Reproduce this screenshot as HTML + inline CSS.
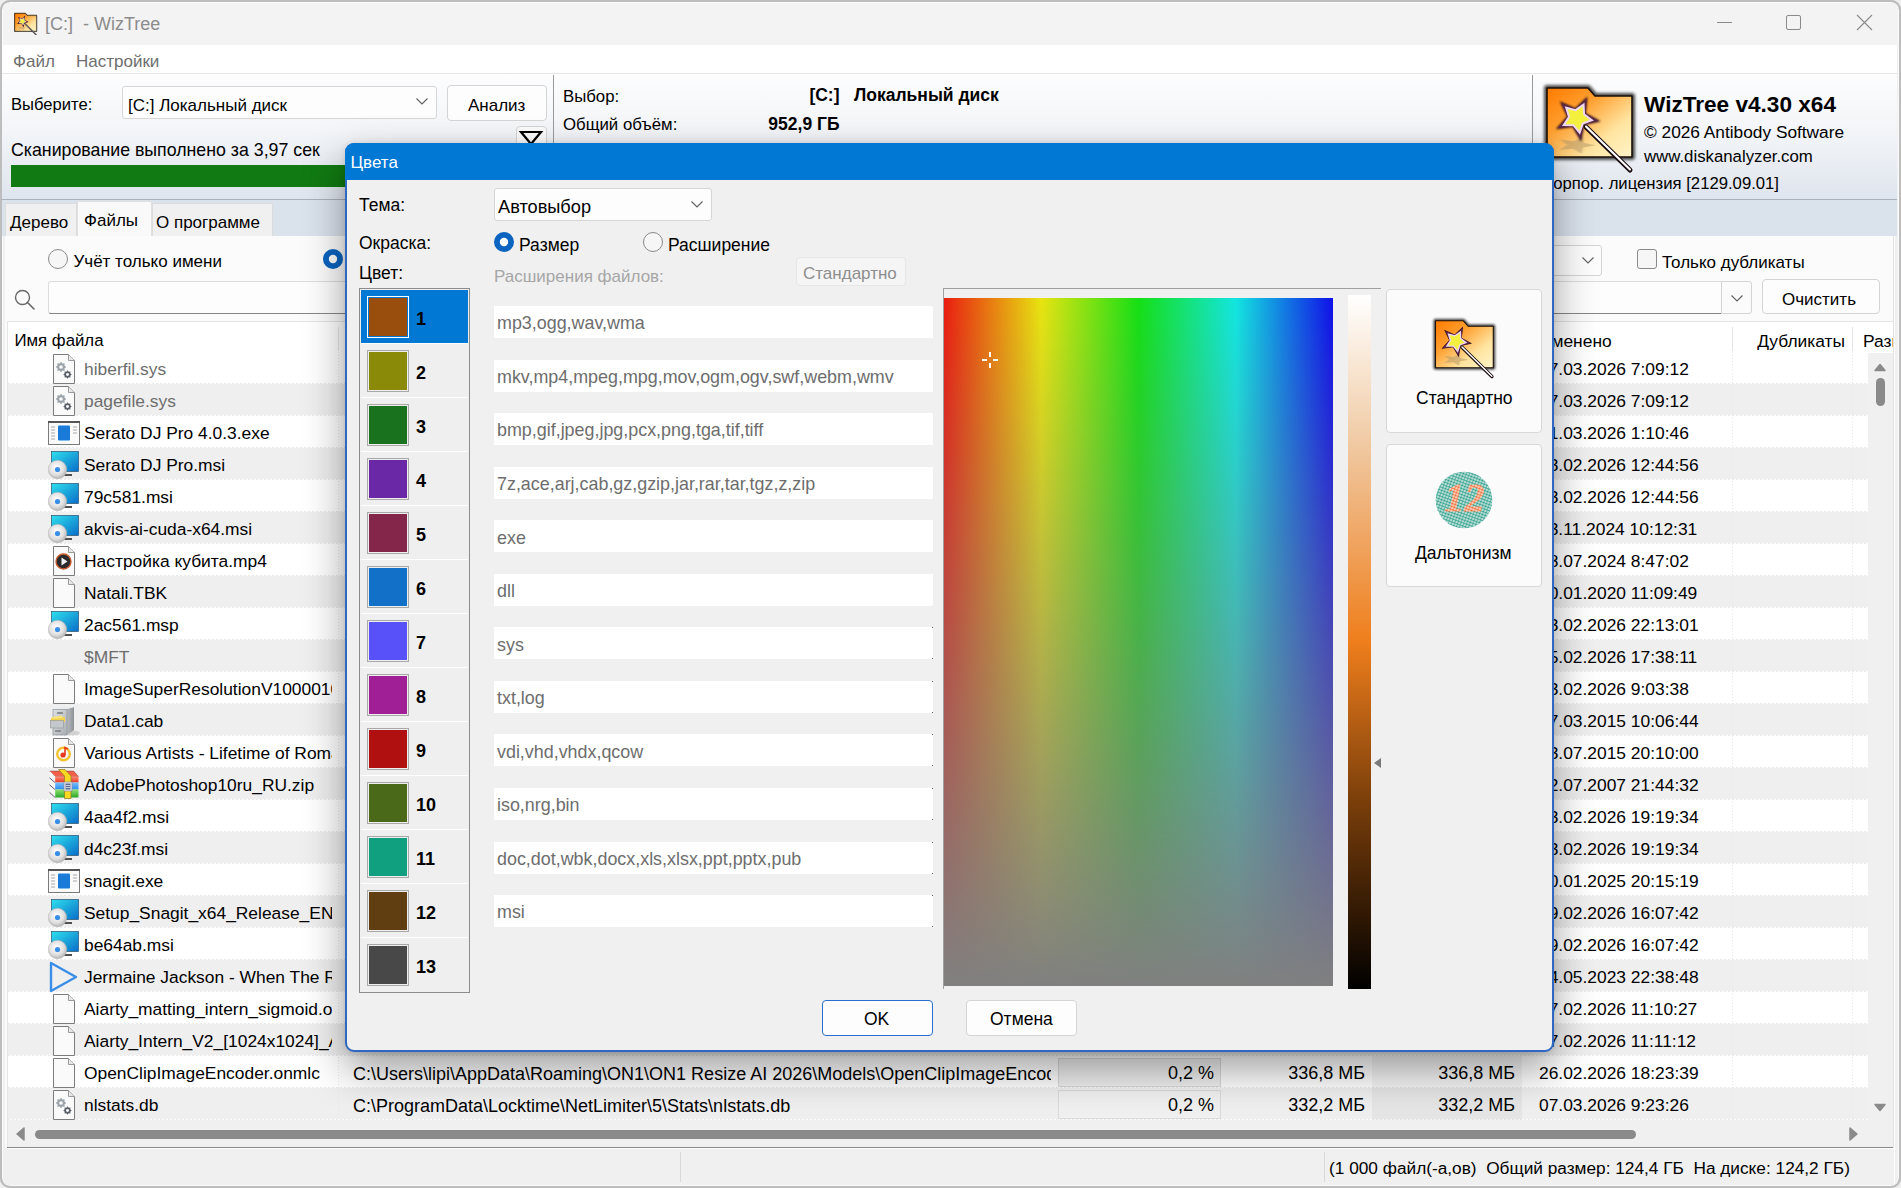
<!DOCTYPE html>
<html><head><meta charset="utf-8"><style>
html,body{margin:0;padding:0;}
body{width:1901px;height:1188px;position:relative;overflow:hidden;background:#eeeeee;font-family:"Liberation Sans", sans-serif;}
.t{position:absolute;white-space:pre;line-height:1;font-family:"Liberation Sans", sans-serif;}
</style></head><body>

<div style="position:absolute;left:0px;top:0px;width:1901px;height:1188px;background:#f0f0f0;border:2px solid #bdbdbd;border-radius:10px;box-sizing:border-box;box-shadow:inset 0 0 0 1px #fbfbfb;"></div>
<div style="position:absolute;left:3px;top:3px;width:1895px;height:42px;background:#f3f3f3;border-radius:8px 8px 0 0;"></div>
<div style="position:absolute;left:2px;top:45px;width:1895px;height:28px;background:#ffffff;"></div>
<div style="position:absolute;left:2px;top:73px;width:1895px;height:1px;background:#e6e6e6;"></div>
<svg style="position:absolute;left:11.5px;top:10.5px;" width="27.5" height="25.5" viewBox="0 0 108 100">
<defs>
<linearGradient id="clg" x1="0" y1="0" x2="1" y2="1"><stop offset="0" stop-color="#ff7a00"/><stop offset="0.35" stop-color="#ffa030"/><stop offset="0.7" stop-color="#ffe4a0"/><stop offset="1" stop-color="#fff4c8"/></linearGradient>
<filter id="cbl" x="-20%" y="-20%" width="140%" height="140%"><feGaussianBlur stdDeviation="1.6"/></filter>
<filter id="cbl2" x="-30%" y="-30%" width="160%" height="160%"><feGaussianBlur stdDeviation="1.0"/></filter>
</defs>
<path d="M11 10 h41 l7 8 h37 v61 h-85 z" fill="none" stroke="#3a3a3a" stroke-width="6" stroke-linejoin="round" filter="url(#cbl)" opacity="0.9"/>
<path d="M11 10 h41 l7 8 h37 v61 h-85 z" fill="url(#clg)" stroke="#1a0e08" stroke-width="1.6" stroke-linejoin="round"/>
<polygon points="46.84,48.21 47.46,61.97 59.99,67.70 47.09,72.54 45.51,86.23 36.92,75.46 23.42,78.18 31.01,66.69 24.24,54.69 37.52,58.35" transform="scale(1,0.45) translate(0,82)" fill="#a89068" opacity="0.45" filter="url(#cbl2)"/>
<polygon points="51.52,18.43 49.83,35.31 64.77,43.34 48.19,46.95 45.17,63.64 36.62,48.99 19.81,51.27 31.10,38.61 23.74,23.33 39.26,30.15" fill="#2a0a1a" filter="url(#cbl2)"/>
<polygon points="50.64,20.23 49.39,35.54 62.79,43.06 47.83,46.60 44.82,61.67 36.84,48.54 21.58,50.33 31.59,38.68 25.17,24.72 39.35,30.64" fill="#5a2848"/>
<polygon points="47.58,26.52 48.06,36.24 55.85,42.09 46.75,45.56 43.60,54.77 37.49,47.19 27.76,47.04 33.08,38.89 30.21,29.58 39.61,32.12" fill="#f4f040" stroke="#f0d8f0" stroke-width="2"/>
<path d="M50 49 L94 92" stroke="#1a0a10" stroke-width="5" stroke-linecap="round"/>
<path d="M50 48.5 L94 91.5" stroke="#ffffff" stroke-width="2.2" stroke-linecap="round"/>
</svg>
<div class="t" style="left:45px;top:14.8px;font-size:18px;color:#8c8c8c;font-weight:normal;">[C:]&nbsp;&nbsp;- WizTree</div>
<div style="position:absolute;left:1717px;top:22px;width:15px;height:1px;background:#8a8a8a;"></div>
<div style="position:absolute;left:1786px;top:15px;width:13px;height:13px;border:1px solid #8a8a8a;border-radius:2px;"></div>
<svg style="position:absolute;left:1856px;top:14px;" width="17" height="17" viewBox="0 0 17 17"><path d="M1 1 L16 16 M16 1 L1 16" stroke="#8a8a8a" stroke-width="1.1"/></svg>
<div class="t" style="left:13px;top:52.6px;font-size:17px;color:#6e6e6e;font-weight:normal;">Файл</div>
<div class="t" style="left:76px;top:52.6px;font-size:17px;color:#6e6e6e;font-weight:normal;">Настройки</div>
<div style="position:absolute;left:2px;top:74px;width:1895px;height:125px;background:linear-gradient(#fdfdfe 0%,#f3f5f8 45%,#dfe5ee 100%);"></div>
<div style="position:absolute;left:2px;top:199px;width:1895px;height:1px;background:#a9b1bb;"></div>
<div class="t" style="left:11px;top:96.9px;font-size:16.6px;color:#000;font-weight:normal;">Выберите:</div>
<div style="position:absolute;left:122px;top:86px;width:314px;height:32px;background:#fdfdfd;border:1px solid #d6d6d6;border-radius:3px;box-sizing:border-box;width:315px;height:33px;"></div>
<div class="t" style="left:128px;top:96.6px;font-size:17px;color:#000;font-weight:normal;">[C:] Локальный диск</div>
<svg style="position:absolute;left:415px;top:96px;" width="14" height="10" viewBox="0 0 14 10"><path d="M1.5 2.5 L7 8 L12.5 2.5" fill="none" stroke="#606060" stroke-width="1.1"/></svg>
<div style="position:absolute;left:447px;top:85px;width:100px;height:36px;background:#fdfdfd;border:1px solid #d4d4d4;border-radius:4px;box-sizing:border-box;"></div>
<div class="t" style="left:468px;top:96.6px;font-size:17px;color:#000;font-weight:normal;">Анализ</div>
<div style="position:absolute;left:516px;top:126px;width:31px;height:30px;background:#fbfbfb;border:1px solid #d4d4d4;border-radius:4px;box-sizing:border-box;"></div>
<svg style="position:absolute;left:518px;top:130px;" width="26" height="16" viewBox="0 0 26 16"><path d="M3 2 L23 2 L13 14 Z" fill="none" stroke="#000" stroke-width="2.2" stroke-linejoin="miter"/></svg>
<div class="t" style="left:11px;top:141.5px;font-size:17.76px;color:#000;font-weight:normal;">Сканирование выполнено за 3,97 сек</div>
<div style="position:absolute;left:11px;top:165px;width:535px;height:22px;background:#117a12;"></div>
<div style="position:absolute;left:553px;top:75px;width:1px;height:124px;background:#9a9a9a;"></div>
<div class="t" style="left:563px;top:88.8px;font-size:16.8px;color:#000;font-weight:normal;">Выбор:</div>
<div class="t" style="left:563px;top:116.8px;font-size:16.8px;color:#000;font-weight:normal;">Общий объём:</div>
<div class="t" style="left:700px;top:87.2px;width:139.5px;text-align:right;font-size:17.5px;font-weight:bold;">[C:]</div>
<div class="t" style="left:854px;top:87.2px;font-size:17.5px;color:#000;font-weight:bold;">Локальный диск</div>
<div class="t" style="left:700px;top:116.2px;width:139.5px;text-align:right;font-size:17.5px;font-weight:bold;">952,9 ГБ</div>
<div style="position:absolute;left:1532px;top:75px;width:1px;height:124px;background:#9a9a9a;"></div>
<svg style="position:absolute;left:1536px;top:78px;" width="108" height="100" viewBox="0 0 108 100">
<defs>
<linearGradient id="alg" x1="0" y1="0" x2="1" y2="1"><stop offset="0" stop-color="#ff7a00"/><stop offset="0.35" stop-color="#ffa030"/><stop offset="0.7" stop-color="#ffe4a0"/><stop offset="1" stop-color="#fff4c8"/></linearGradient>
<filter id="abl" x="-20%" y="-20%" width="140%" height="140%"><feGaussianBlur stdDeviation="1.6"/></filter>
<filter id="abl2" x="-30%" y="-30%" width="160%" height="160%"><feGaussianBlur stdDeviation="1.0"/></filter>
</defs>
<path d="M11 10 h41 l7 8 h37 v61 h-85 z" fill="none" stroke="#3a3a3a" stroke-width="6" stroke-linejoin="round" filter="url(#abl)" opacity="0.9"/>
<path d="M11 10 h41 l7 8 h37 v61 h-85 z" fill="url(#alg)" stroke="#1a0e08" stroke-width="1.6" stroke-linejoin="round"/>
<polygon points="46.84,48.21 47.46,61.97 59.99,67.70 47.09,72.54 45.51,86.23 36.92,75.46 23.42,78.18 31.01,66.69 24.24,54.69 37.52,58.35" transform="scale(1,0.45) translate(0,82)" fill="#a89068" opacity="0.45" filter="url(#abl2)"/>
<polygon points="51.52,18.43 49.83,35.31 64.77,43.34 48.19,46.95 45.17,63.64 36.62,48.99 19.81,51.27 31.10,38.61 23.74,23.33 39.26,30.15" fill="#2a0a1a" filter="url(#abl2)"/>
<polygon points="50.64,20.23 49.39,35.54 62.79,43.06 47.83,46.60 44.82,61.67 36.84,48.54 21.58,50.33 31.59,38.68 25.17,24.72 39.35,30.64" fill="#5a2848"/>
<polygon points="47.58,26.52 48.06,36.24 55.85,42.09 46.75,45.56 43.60,54.77 37.49,47.19 27.76,47.04 33.08,38.89 30.21,29.58 39.61,32.12" fill="#f4f040" stroke="#f0d8f0" stroke-width="2"/>
<path d="M50 49 L94 92" stroke="#1a0a10" stroke-width="5" stroke-linecap="round"/>
<path d="M50 48.5 L94 91.5" stroke="#ffffff" stroke-width="2.2" stroke-linecap="round"/>
</svg>
<div class="t" style="left:1644px;top:93.9px;font-size:22.6px;color:#000;font-weight:bold;">WizTree v4.30 x64</div>
<div class="t" style="left:1644px;top:124.4px;font-size:17.3px;color:#000;font-weight:normal;">© 2026 Antibody Software</div>
<div class="t" style="left:1644px;top:148.8px;font-size:16.8px;color:#000;font-weight:normal;">www.diskanalyzer.com</div>
<div class="t" style="left:1380px;top:175.6px;width:399px;text-align:right;font-size:16.7px;">Корпор. лицензия [2129.09.01]</div>
<div style="position:absolute;left:2px;top:200px;width:1895px;height:36px;background:#dae2ec;"></div>
<div style="position:absolute;left:5px;top:203px;width:72px;height:33px;background:#f0f0f0;border:1px solid #dcdcdc;border-bottom:none;box-sizing:border-box;"></div>
<div style="position:absolute;left:152px;top:203px;width:121px;height:33px;background:#f0f0f0;border:1px solid #dcdcdc;border-bottom:none;box-sizing:border-box;"></div>
<div style="position:absolute;left:77px;top:201px;width:75px;height:37px;background:#f9f9f9;border:1px solid #e0e0e0;border-bottom:none;box-sizing:border-box;"></div>
<div class="t" style="left:10px;top:213.6px;font-size:17px;color:#000;font-weight:normal;">Дерево</div>
<div class="t" style="left:84px;top:211.6px;font-size:17px;color:#000;font-weight:normal;">Файлы</div>
<div class="t" style="left:156px;top:213.6px;font-size:17px;color:#000;font-weight:normal;">О программе</div>
<div style="position:absolute;left:5px;top:236px;width:1892px;height:912px;background:#fbfbfb;"></div>
<svg style="position:absolute;left:47px;top:248px;" width="22" height="22" viewBox="0 0 22 22"><circle cx="11" cy="11" r="9.5" fill="#f6f6f6" stroke="#8a8a8a" stroke-width="1"/></svg>
<div class="t" style="left:73.5px;top:253.1px;font-size:17px;color:#000;font-weight:normal;">Учёт только имени</div>
<svg style="position:absolute;left:322px;top:248px;" width="22" height="22" viewBox="0 0 22 22"><circle cx="11" cy="11" r="10" fill="#0a64c0"/><circle cx="11" cy="11" r="4.2" fill="#fff"/></svg>
<div style="position:absolute;left:1400px;top:245px;width:202px;height:31px;background:#fdfdfd;border:1px solid #d4d4d4;border-radius:3px;box-sizing:border-box;"></div>
<svg style="position:absolute;left:1581px;top:255px;" width="14" height="10" viewBox="0 0 14 10"><path d="M1.5 2.5 L7 8 L12.5 2.5" fill="none" stroke="#606060" stroke-width="1.1"/></svg>
<div style="position:absolute;left:1637px;top:249px;width:20px;height:20px;background:#f6f6f6;border:1px solid #8a8a8a;border-radius:3px;box-sizing:border-box;"></div>
<div class="t" style="left:1662px;top:253.6px;font-size:17px;color:#000;font-weight:normal;">Только дубликаты</div>
<svg style="position:absolute;left:13px;top:288px;" width="24" height="24" viewBox="0 0 24 24"><circle cx="9.5" cy="9.5" r="7" fill="none" stroke="#666" stroke-width="1.4"/><path d="M14.5 14.5 L21 21" stroke="#666" stroke-width="1.6" stroke-linecap="round"/></svg>
<div style="position:absolute;left:48px;top:281px;width:1674px;height:33px;background:#fdfdfd;border:1px solid #dcdcdc;border-bottom:1px solid #868686;border-radius:3px 0 0 3px;box-sizing:border-box;"></div>
<div style="position:absolute;left:1721px;top:281px;width:31px;height:33px;background:#fbfbfb;border:1px solid #d4d4d4;border-radius:0 3px 3px 0;box-sizing:border-box;"></div>
<svg style="position:absolute;left:1730px;top:293px;" width="14" height="10" viewBox="0 0 14 10"><path d="M1.5 2.5 L7 8 L12.5 2.5" fill="none" stroke="#606060" stroke-width="1.1"/></svg>
<div style="position:absolute;left:1762px;top:279px;width:118px;height:35px;background:#fdfdfd;border:1px solid #d4d4d4;border-radius:4px;box-sizing:border-box;"></div>
<div class="t" style="left:1782px;top:290.6px;font-size:17px;color:#000;font-weight:normal;">Очистить</div>
<div style="position:absolute;left:7px;top:321px;width:1890px;height:827px;background:#ffffff;border-top:1px solid #e4e4e4;border-left:1px solid #e4e4e4;box-sizing:border-box;"></div>
<div class="t" style="left:14.5px;top:333.3px;font-size:16.8px;color:#000;font-weight:normal;">Имя файла</div>
<div style="position:absolute;left:338px;top:327px;width:1px;height:24px;background:#e6e6e6;"></div>
<div style="position:absolute;left:1732px;top:327px;width:1px;height:24px;background:#e6e6e6;"></div>
<div style="position:absolute;left:1852px;top:327px;width:1px;height:24px;background:#e6e6e6;"></div>
<div class="t" style="left:1531px;top:332.8px;font-size:17.4px;color:#000;font-weight:normal;">Изменено</div>
<div class="t" style="left:1600px;top:333px;width:245px;text-align:right;font-size:17.4px;">Дубликаты</div>
<div style="position:absolute;left:1863px;top:326px;width:30px;height:26px;overflow:hidden;"><div class="t" style="left:0;top:6.8px;font-size:17.4px;">Размер</div></div>
<div style="position:absolute;left:8px;top:352px;width:1860px;height:32px;background:#ffffff;"></div>
<div style="position:absolute;left:8px;top:383px;width:1860px;height:1px;background:repeating-linear-gradient(90deg,#ebebeb 0 2px,#fdfdfd 2px 4px);"></div>
<div style="position:absolute;left:8px;top:384px;width:1860px;height:32px;background:#efefef;"></div>
<div style="position:absolute;left:8px;top:415px;width:1860px;height:1px;background:repeating-linear-gradient(90deg,#ebebeb 0 2px,#fdfdfd 2px 4px);"></div>
<div style="position:absolute;left:8px;top:416px;width:1860px;height:32px;background:#ffffff;"></div>
<div style="position:absolute;left:8px;top:447px;width:1860px;height:1px;background:repeating-linear-gradient(90deg,#ebebeb 0 2px,#fdfdfd 2px 4px);"></div>
<div style="position:absolute;left:8px;top:448px;width:1860px;height:32px;background:#efefef;"></div>
<div style="position:absolute;left:8px;top:479px;width:1860px;height:1px;background:repeating-linear-gradient(90deg,#ebebeb 0 2px,#fdfdfd 2px 4px);"></div>
<div style="position:absolute;left:8px;top:480px;width:1860px;height:32px;background:#ffffff;"></div>
<div style="position:absolute;left:8px;top:511px;width:1860px;height:1px;background:repeating-linear-gradient(90deg,#ebebeb 0 2px,#fdfdfd 2px 4px);"></div>
<div style="position:absolute;left:8px;top:512px;width:1860px;height:32px;background:#efefef;"></div>
<div style="position:absolute;left:8px;top:543px;width:1860px;height:1px;background:repeating-linear-gradient(90deg,#ebebeb 0 2px,#fdfdfd 2px 4px);"></div>
<div style="position:absolute;left:8px;top:544px;width:1860px;height:32px;background:#ffffff;"></div>
<div style="position:absolute;left:8px;top:575px;width:1860px;height:1px;background:repeating-linear-gradient(90deg,#ebebeb 0 2px,#fdfdfd 2px 4px);"></div>
<div style="position:absolute;left:8px;top:576px;width:1860px;height:32px;background:#efefef;"></div>
<div style="position:absolute;left:8px;top:607px;width:1860px;height:1px;background:repeating-linear-gradient(90deg,#ebebeb 0 2px,#fdfdfd 2px 4px);"></div>
<div style="position:absolute;left:8px;top:608px;width:1860px;height:32px;background:#ffffff;"></div>
<div style="position:absolute;left:8px;top:639px;width:1860px;height:1px;background:repeating-linear-gradient(90deg,#ebebeb 0 2px,#fdfdfd 2px 4px);"></div>
<div style="position:absolute;left:8px;top:640px;width:1860px;height:32px;background:#efefef;"></div>
<div style="position:absolute;left:8px;top:671px;width:1860px;height:1px;background:repeating-linear-gradient(90deg,#ebebeb 0 2px,#fdfdfd 2px 4px);"></div>
<div style="position:absolute;left:8px;top:672px;width:1860px;height:32px;background:#ffffff;"></div>
<div style="position:absolute;left:8px;top:703px;width:1860px;height:1px;background:repeating-linear-gradient(90deg,#ebebeb 0 2px,#fdfdfd 2px 4px);"></div>
<div style="position:absolute;left:8px;top:704px;width:1860px;height:32px;background:#efefef;"></div>
<div style="position:absolute;left:8px;top:735px;width:1860px;height:1px;background:repeating-linear-gradient(90deg,#ebebeb 0 2px,#fdfdfd 2px 4px);"></div>
<div style="position:absolute;left:8px;top:736px;width:1860px;height:32px;background:#ffffff;"></div>
<div style="position:absolute;left:8px;top:767px;width:1860px;height:1px;background:repeating-linear-gradient(90deg,#ebebeb 0 2px,#fdfdfd 2px 4px);"></div>
<div style="position:absolute;left:8px;top:768px;width:1860px;height:32px;background:#efefef;"></div>
<div style="position:absolute;left:8px;top:799px;width:1860px;height:1px;background:repeating-linear-gradient(90deg,#ebebeb 0 2px,#fdfdfd 2px 4px);"></div>
<div style="position:absolute;left:8px;top:800px;width:1860px;height:32px;background:#ffffff;"></div>
<div style="position:absolute;left:8px;top:831px;width:1860px;height:1px;background:repeating-linear-gradient(90deg,#ebebeb 0 2px,#fdfdfd 2px 4px);"></div>
<div style="position:absolute;left:8px;top:832px;width:1860px;height:32px;background:#efefef;"></div>
<div style="position:absolute;left:8px;top:863px;width:1860px;height:1px;background:repeating-linear-gradient(90deg,#ebebeb 0 2px,#fdfdfd 2px 4px);"></div>
<div style="position:absolute;left:8px;top:864px;width:1860px;height:32px;background:#ffffff;"></div>
<div style="position:absolute;left:8px;top:895px;width:1860px;height:1px;background:repeating-linear-gradient(90deg,#ebebeb 0 2px,#fdfdfd 2px 4px);"></div>
<div style="position:absolute;left:8px;top:896px;width:1860px;height:32px;background:#efefef;"></div>
<div style="position:absolute;left:8px;top:927px;width:1860px;height:1px;background:repeating-linear-gradient(90deg,#ebebeb 0 2px,#fdfdfd 2px 4px);"></div>
<div style="position:absolute;left:8px;top:928px;width:1860px;height:32px;background:#ffffff;"></div>
<div style="position:absolute;left:8px;top:959px;width:1860px;height:1px;background:repeating-linear-gradient(90deg,#ebebeb 0 2px,#fdfdfd 2px 4px);"></div>
<div style="position:absolute;left:8px;top:960px;width:1860px;height:32px;background:#efefef;"></div>
<div style="position:absolute;left:8px;top:991px;width:1860px;height:1px;background:repeating-linear-gradient(90deg,#ebebeb 0 2px,#fdfdfd 2px 4px);"></div>
<div style="position:absolute;left:8px;top:992px;width:1860px;height:32px;background:#ffffff;"></div>
<div style="position:absolute;left:8px;top:1023px;width:1860px;height:1px;background:repeating-linear-gradient(90deg,#ebebeb 0 2px,#fdfdfd 2px 4px);"></div>
<div style="position:absolute;left:8px;top:1024px;width:1860px;height:32px;background:#efefef;"></div>
<div style="position:absolute;left:8px;top:1055px;width:1860px;height:1px;background:repeating-linear-gradient(90deg,#ebebeb 0 2px,#fdfdfd 2px 4px);"></div>
<div style="position:absolute;left:8px;top:1056px;width:1860px;height:32px;background:#ffffff;"></div>
<div style="position:absolute;left:8px;top:1087px;width:1860px;height:1px;background:repeating-linear-gradient(90deg,#ebebeb 0 2px,#fdfdfd 2px 4px);"></div>
<div style="position:absolute;left:8px;top:1088px;width:1860px;height:32px;background:#efefef;"></div>
<div style="position:absolute;left:8px;top:1119px;width:1860px;height:1px;background:repeating-linear-gradient(90deg,#ebebeb 0 2px,#fdfdfd 2px 4px);"></div>
<svg style="position:absolute;left:52px;top:354px;" width="24" height="31" viewBox="0 0 24 31"><path d="M1.5 .5 H16.5 L22.5 6.5 V29.5 H1.5 Z" fill="#fafafa" stroke="#7c7c7c" stroke-width="1"/><path d="M16.5 .5 V6.5 H22.5" fill="#e8e8e8" stroke="#9a9a9a" stroke-width="1"/><polygon points="14.20,13.00 12.46,14.43 12.68,16.68 10.43,16.46 9.00,18.20 7.57,16.46 5.32,16.68 5.54,14.43 3.80,13.00 5.54,11.57 5.32,9.32 7.57,9.54 9.00,7.80 10.43,9.54 12.68,9.32 12.46,11.57" fill="#9ca3ab"/><circle cx="9" cy="13" r="1.82" fill="#fafafa"/><polygon points="19.70,20.50 18.29,21.66 18.47,23.47 16.66,23.29 15.50,24.70 14.34,23.29 12.53,23.47 12.71,21.66 11.30,20.50 12.71,19.34 12.53,17.53 14.34,17.71 15.50,16.30 16.66,17.71 18.47,17.53 18.29,19.34" fill="#596069"/><circle cx="15.5" cy="20.5" r="1.47" fill="#fafafa"/></svg>
<div class="t" style="left:84px;top:360.5px;width:248px;overflow:hidden;padding-bottom:6px;font-size:17.4px;color:#6d6d6d;">hiberfil.sys</div>
<div class="t" style="left:1539px;top:361.0px;font-size:17.4px;color:#000;font-weight:normal;">07.03.2026 7:09:12</div>
<svg style="position:absolute;left:52px;top:386px;" width="24" height="31" viewBox="0 0 24 31"><path d="M1.5 .5 H16.5 L22.5 6.5 V29.5 H1.5 Z" fill="#fafafa" stroke="#7c7c7c" stroke-width="1"/><path d="M16.5 .5 V6.5 H22.5" fill="#e8e8e8" stroke="#9a9a9a" stroke-width="1"/><polygon points="14.20,13.00 12.46,14.43 12.68,16.68 10.43,16.46 9.00,18.20 7.57,16.46 5.32,16.68 5.54,14.43 3.80,13.00 5.54,11.57 5.32,9.32 7.57,9.54 9.00,7.80 10.43,9.54 12.68,9.32 12.46,11.57" fill="#9ca3ab"/><circle cx="9" cy="13" r="1.82" fill="#fafafa"/><polygon points="19.70,20.50 18.29,21.66 18.47,23.47 16.66,23.29 15.50,24.70 14.34,23.29 12.53,23.47 12.71,21.66 11.30,20.50 12.71,19.34 12.53,17.53 14.34,17.71 15.50,16.30 16.66,17.71 18.47,17.53 18.29,19.34" fill="#596069"/><circle cx="15.5" cy="20.5" r="1.47" fill="#fafafa"/></svg>
<div class="t" style="left:84px;top:392.5px;width:248px;overflow:hidden;padding-bottom:6px;font-size:17.4px;color:#6d6d6d;">pagefile.sys</div>
<div class="t" style="left:1539px;top:393.0px;font-size:17.4px;color:#000;font-weight:normal;">07.03.2026 7:09:12</div>
<svg style="position:absolute;left:48px;top:421px;" width="32" height="24" viewBox="0 0 32 24"><rect x=".5" y=".5" width="31" height="23" fill="#fafafa" stroke="#7a7a7a"/><rect x="0" y="0" width="32" height="2" fill="#555"/><rect x="10" y="4.5" width="12" height="15" rx="1" fill="#1a7ad8"/><path d="M3 6h4M3 9h4M3 12h4M3 15h4M3 18h4M25 6h4M25 9h4M25 12h4" stroke="#a8a8a8" stroke-width="1"/></svg>
<div class="t" style="left:84px;top:424.5px;width:248px;overflow:hidden;padding-bottom:6px;font-size:17.4px;color:#000;">Serato DJ Pro 4.0.3.exe</div>
<div class="t" style="left:1539px;top:425.0px;font-size:17.4px;color:#000;font-weight:normal;">01.03.2026 1:10:46</div>
<svg style="position:absolute;left:48px;top:450px;" width="33" height="30" viewBox="0 0 33 30"><defs><linearGradient id="mg" x1="0" y1="0" x2="1" y2="1"><stop offset="0" stop-color="#2ee0ee"/><stop offset="1" stop-color="#0a6ec8"/></linearGradient><radialGradient id="cd" cx=".45" cy=".4" r=".65"><stop offset="0" stop-color="#ffffff"/><stop offset=".6" stop-color="#e0e0e0"/><stop offset="1" stop-color="#a8a8a8"/></radialGradient></defs><rect x="3.5" y="1.5" width="27" height="20" fill="url(#mg)" stroke="#2a5070" stroke-width=".7"/><rect x="12" y="24" width="12" height="2" fill="#505050"/><circle cx="9.5" cy="19.5" r="9.3" fill="url(#cd)" stroke="#b0b0b0" stroke-width=".5"/><circle cx="9.5" cy="19.5" r="2.6" fill="#3a8ee6"/></svg>
<div class="t" style="left:84px;top:456.5px;width:248px;overflow:hidden;padding-bottom:6px;font-size:17.4px;color:#000;">Serato DJ Pro.msi</div>
<div class="t" style="left:1539px;top:457.0px;font-size:17.4px;color:#000;font-weight:normal;">23.02.2026 12:44:56</div>
<svg style="position:absolute;left:48px;top:482px;" width="33" height="30" viewBox="0 0 33 30"><defs><linearGradient id="mg" x1="0" y1="0" x2="1" y2="1"><stop offset="0" stop-color="#2ee0ee"/><stop offset="1" stop-color="#0a6ec8"/></linearGradient><radialGradient id="cd" cx=".45" cy=".4" r=".65"><stop offset="0" stop-color="#ffffff"/><stop offset=".6" stop-color="#e0e0e0"/><stop offset="1" stop-color="#a8a8a8"/></radialGradient></defs><rect x="3.5" y="1.5" width="27" height="20" fill="url(#mg)" stroke="#2a5070" stroke-width=".7"/><rect x="12" y="24" width="12" height="2" fill="#505050"/><circle cx="9.5" cy="19.5" r="9.3" fill="url(#cd)" stroke="#b0b0b0" stroke-width=".5"/><circle cx="9.5" cy="19.5" r="2.6" fill="#3a8ee6"/></svg>
<div class="t" style="left:84px;top:488.5px;width:248px;overflow:hidden;padding-bottom:6px;font-size:17.4px;color:#000;">79c581.msi</div>
<div class="t" style="left:1539px;top:489.0px;font-size:17.4px;color:#000;font-weight:normal;">23.02.2026 12:44:56</div>
<svg style="position:absolute;left:48px;top:514px;" width="33" height="30" viewBox="0 0 33 30"><defs><linearGradient id="mg" x1="0" y1="0" x2="1" y2="1"><stop offset="0" stop-color="#2ee0ee"/><stop offset="1" stop-color="#0a6ec8"/></linearGradient><radialGradient id="cd" cx=".45" cy=".4" r=".65"><stop offset="0" stop-color="#ffffff"/><stop offset=".6" stop-color="#e0e0e0"/><stop offset="1" stop-color="#a8a8a8"/></radialGradient></defs><rect x="3.5" y="1.5" width="27" height="20" fill="url(#mg)" stroke="#2a5070" stroke-width=".7"/><rect x="12" y="24" width="12" height="2" fill="#505050"/><circle cx="9.5" cy="19.5" r="9.3" fill="url(#cd)" stroke="#b0b0b0" stroke-width=".5"/><circle cx="9.5" cy="19.5" r="2.6" fill="#3a8ee6"/></svg>
<div class="t" style="left:84px;top:520.5px;width:248px;overflow:hidden;padding-bottom:6px;font-size:17.4px;color:#000;">akvis-ai-cuda-x64.msi</div>
<div class="t" style="left:1539px;top:521.0px;font-size:17.4px;color:#000;font-weight:normal;">13.11.2024 10:12:31</div>
<svg style="position:absolute;left:52px;top:546px;" width="24" height="31" viewBox="0 0 24 31"><path d="M1.5 .5 H16.5 L22.5 6.5 V29.5 H1.5 Z" fill="#fafafa" stroke="#7c7c7c" stroke-width="1"/><path d="M16.5 .5 V6.5 H22.5" fill="#e8e8e8" stroke="#9a9a9a" stroke-width="1"/><circle cx="11.5" cy="15.5" r="7.5" fill="#2a2a2a" stroke="#c85a30" stroke-width="1.4"/><path d="M9.5 11.5 L15.5 15.5 L9.5 19.5Z" fill="#f0f0f0"/></svg>
<div class="t" style="left:84px;top:552.5px;width:248px;overflow:hidden;padding-bottom:6px;font-size:17.4px;color:#000;">Настройка кубита.mp4</div>
<div class="t" style="left:1539px;top:553.0px;font-size:17.4px;color:#000;font-weight:normal;">18.07.2024 8:47:02</div>
<svg style="position:absolute;left:52px;top:578px;" width="24" height="31" viewBox="0 0 24 31"><path d="M1.5 .5 H16.5 L22.5 6.5 V29.5 H1.5 Z" fill="#fafafa" stroke="#7c7c7c" stroke-width="1"/><path d="M16.5 .5 V6.5 H22.5" fill="#e8e8e8" stroke="#9a9a9a" stroke-width="1"/></svg>
<div class="t" style="left:84px;top:584.5px;width:248px;overflow:hidden;padding-bottom:6px;font-size:17.4px;color:#000;">Natali.TBK</div>
<div class="t" style="left:1539px;top:585.0px;font-size:17.4px;color:#000;font-weight:normal;">10.01.2020 11:09:49</div>
<svg style="position:absolute;left:48px;top:610px;" width="33" height="30" viewBox="0 0 33 30"><defs><linearGradient id="mg" x1="0" y1="0" x2="1" y2="1"><stop offset="0" stop-color="#2ee0ee"/><stop offset="1" stop-color="#0a6ec8"/></linearGradient><radialGradient id="cd" cx=".45" cy=".4" r=".65"><stop offset="0" stop-color="#ffffff"/><stop offset=".6" stop-color="#e0e0e0"/><stop offset="1" stop-color="#a8a8a8"/></radialGradient></defs><rect x="3.5" y="1.5" width="27" height="20" fill="url(#mg)" stroke="#2a5070" stroke-width=".7"/><rect x="12" y="24" width="12" height="2" fill="#505050"/><circle cx="9.5" cy="19.5" r="9.3" fill="url(#cd)" stroke="#b0b0b0" stroke-width=".5"/><circle cx="9.5" cy="19.5" r="2.6" fill="#3a8ee6"/></svg>
<div class="t" style="left:84px;top:616.5px;width:248px;overflow:hidden;padding-bottom:6px;font-size:17.4px;color:#000;">2ac561.msp</div>
<div class="t" style="left:1539px;top:617.0px;font-size:17.4px;color:#000;font-weight:normal;">23.02.2026 22:13:01</div>
<div class="t" style="left:84px;top:648.5px;width:248px;overflow:hidden;padding-bottom:6px;font-size:17.4px;color:#6d6d6d;">$MFT</div>
<div class="t" style="left:1539px;top:649.0px;font-size:17.4px;color:#000;font-weight:normal;">15.02.2026 17:38:11</div>
<svg style="position:absolute;left:52px;top:674px;" width="24" height="31" viewBox="0 0 24 31"><path d="M1.5 .5 H16.5 L22.5 6.5 V29.5 H1.5 Z" fill="#fafafa" stroke="#7c7c7c" stroke-width="1"/><path d="M16.5 .5 V6.5 H22.5" fill="#e8e8e8" stroke="#9a9a9a" stroke-width="1"/></svg>
<div class="t" style="left:84px;top:680.5px;width:248px;overflow:hidden;padding-bottom:6px;font-size:17.4px;color:#000;">ImageSuperResolutionV1000010</div>
<div class="t" style="left:1539px;top:681.0px;font-size:17.4px;color:#000;font-weight:normal;">23.02.2026 9:03:38</div>
<svg style="position:absolute;left:48px;top:705px;" width="32" height="32" viewBox="0 0 32 32"><defs><linearGradient id="cbf" x1="0" y1="0" x2="1" y2="1"><stop offset="0" stop-color="#dfe2e4"/><stop offset="1" stop-color="#a9aeb2"/></linearGradient><linearGradient id="cbs" x1="0" y1="0" x2="1" y2="0"><stop offset="0" stop-color="#b8bcc0"/><stop offset="1" stop-color="#8c9196"/></linearGradient></defs><ellipse cx="24" cy="28" rx="8" ry="2.5" fill="#000" opacity=".12"/><path d="M19 4 L26 2 L26 25 L19 30Z" fill="url(#cbs)"/><path d="M5 5 L12 2.5 L26 2 L19 4Z" fill="#e8eaec"/><rect x="5" y="4.5" width="14" height="25.5" fill="url(#cbf)" stroke="#8e9398" stroke-width=".7"/><rect x="9" y="7" width="6" height="2" rx=".6" fill="#8a8f94"/><path d="M3 13 L17 12 L17 17 L3 18Z" fill="#f2d24a"/><path d="M4 12 L14 10.5 L15 13 L4 14Z" fill="#fbe27a"/><rect x="2.5" y="15.5" width="13" height="7.5" fill="#c4c8cc" stroke="#8e9398" stroke-width=".6"/><rect x="7" y="25" width="6" height="2" rx=".6" fill="#8a8f94"/></svg>
<div class="t" style="left:84px;top:712.5px;width:248px;overflow:hidden;padding-bottom:6px;font-size:17.4px;color:#000;">Data1.cab</div>
<div class="t" style="left:1539px;top:713.0px;font-size:17.4px;color:#000;font-weight:normal;">17.03.2015 10:06:44</div>
<svg style="position:absolute;left:52px;top:738px;" width="24" height="31" viewBox="0 0 24 31"><path d="M1.5 .5 H16.5 L22.5 6.5 V29.5 H1.5 Z" fill="#fafafa" stroke="#7c7c7c" stroke-width="1"/><path d="M16.5 .5 V6.5 H22.5" fill="#e8e8e8" stroke="#9a9a9a" stroke-width="1"/><circle cx="11.5" cy="16" r="6.3" fill="none" stroke="#f2c230" stroke-width="2.4"/><circle cx="11" cy="17" r="2.6" fill="#e83a20"/><path d="M13 17 V9.5 L16 11" fill="none" stroke="#e83a20" stroke-width="1.6"/></svg>
<div class="t" style="left:84px;top:744.5px;width:248px;overflow:hidden;padding-bottom:6px;font-size:17.4px;color:#000;">Various Artists - Lifetime of Romance</div>
<div class="t" style="left:1539px;top:745.0px;font-size:17.4px;color:#000;font-weight:normal;">13.07.2015 20:10:00</div>
<svg style="position:absolute;left:48px;top:769px;" width="33" height="32" viewBox="0 0 33 32"><defs><linearGradient id="zr" x1="0" y1="0" x2="0" y2="1"><stop offset="0" stop-color="#ff8a78"/><stop offset="1" stop-color="#e83a20"/></linearGradient><linearGradient id="zb" x1="0" y1="0" x2="0" y2="1"><stop offset="0" stop-color="#7ac0ff"/><stop offset="1" stop-color="#2a8ef0"/></linearGradient><linearGradient id="zg" x1="0" y1="0" x2="0" y2="1"><stop offset="0" stop-color="#90e070"/><stop offset="1" stop-color="#2aa82a"/></linearGradient></defs><path d="M1.7 2.1 L25.6 2.1 L30.5 7.5 L7.1 7.5Z" fill="#f2604a" stroke="#8a3a30" stroke-width=".5"/><rect x="7.1" y="7.5" width="23.4" height="6" fill="url(#zr)"/><rect x="7.1" y="13.5" width="23.4" height="7" fill="url(#zb)"/><rect x="7.1" y="20.5" width="23.4" height="8" fill="url(#zg)"/><path d="M1.7 2.1 L7.1 7.5 L7.1 28.5 L1.7 23.5Z" fill="#f4f6f4"/><path d="M1.5 8.8 L7.1 13.6 M1.5 15.8 L7.1 20.6 M1.5 23.3 L7.1 28.5" stroke="#5a4a6a" stroke-width=".9" fill="none"/><path d="M10.5 0.5 L17 0.5 L23 7 L23 29.5 L16.5 29.5 L16.5 7Z" fill="#f8d820" stroke="#8a7a20" stroke-width=".7"/><rect x="16" y="13" width="8" height="9" fill="#e8e8f0" stroke="#8a8aa0" stroke-width=".7"/><rect x="17.5" y="14.5" width="5" height="6" fill="#5a6a90"/><path d="M17.5 16.5 H22.5 M17.5 18.5 H22.5" stroke="#e8e8f0" stroke-width=".8"/></svg>
<div class="t" style="left:84px;top:776.5px;width:248px;overflow:hidden;padding-bottom:6px;font-size:17.4px;color:#000;">AdobePhotoshop10ru_RU.zip</div>
<div class="t" style="left:1539px;top:777.0px;font-size:17.4px;color:#000;font-weight:normal;">02.07.2007 21:44:32</div>
<svg style="position:absolute;left:48px;top:802px;" width="33" height="30" viewBox="0 0 33 30"><defs><linearGradient id="mg" x1="0" y1="0" x2="1" y2="1"><stop offset="0" stop-color="#2ee0ee"/><stop offset="1" stop-color="#0a6ec8"/></linearGradient><radialGradient id="cd" cx=".45" cy=".4" r=".65"><stop offset="0" stop-color="#ffffff"/><stop offset=".6" stop-color="#e0e0e0"/><stop offset="1" stop-color="#a8a8a8"/></radialGradient></defs><rect x="3.5" y="1.5" width="27" height="20" fill="url(#mg)" stroke="#2a5070" stroke-width=".7"/><rect x="12" y="24" width="12" height="2" fill="#505050"/><circle cx="9.5" cy="19.5" r="9.3" fill="url(#cd)" stroke="#b0b0b0" stroke-width=".5"/><circle cx="9.5" cy="19.5" r="2.6" fill="#3a8ee6"/></svg>
<div class="t" style="left:84px;top:808.5px;width:248px;overflow:hidden;padding-bottom:6px;font-size:17.4px;color:#000;">4aa4f2.msi</div>
<div class="t" style="left:1539px;top:809.0px;font-size:17.4px;color:#000;font-weight:normal;">13.02.2026 19:19:34</div>
<svg style="position:absolute;left:48px;top:834px;" width="33" height="30" viewBox="0 0 33 30"><defs><linearGradient id="mg" x1="0" y1="0" x2="1" y2="1"><stop offset="0" stop-color="#2ee0ee"/><stop offset="1" stop-color="#0a6ec8"/></linearGradient><radialGradient id="cd" cx=".45" cy=".4" r=".65"><stop offset="0" stop-color="#ffffff"/><stop offset=".6" stop-color="#e0e0e0"/><stop offset="1" stop-color="#a8a8a8"/></radialGradient></defs><rect x="3.5" y="1.5" width="27" height="20" fill="url(#mg)" stroke="#2a5070" stroke-width=".7"/><rect x="12" y="24" width="12" height="2" fill="#505050"/><circle cx="9.5" cy="19.5" r="9.3" fill="url(#cd)" stroke="#b0b0b0" stroke-width=".5"/><circle cx="9.5" cy="19.5" r="2.6" fill="#3a8ee6"/></svg>
<div class="t" style="left:84px;top:840.5px;width:248px;overflow:hidden;padding-bottom:6px;font-size:17.4px;color:#000;">d4c23f.msi</div>
<div class="t" style="left:1539px;top:841.0px;font-size:17.4px;color:#000;font-weight:normal;">13.02.2026 19:19:34</div>
<svg style="position:absolute;left:48px;top:869px;" width="32" height="24" viewBox="0 0 32 24"><rect x=".5" y=".5" width="31" height="23" fill="#fafafa" stroke="#7a7a7a"/><rect x="0" y="0" width="32" height="2" fill="#555"/><rect x="10" y="4.5" width="12" height="15" rx="1" fill="#1a7ad8"/><path d="M3 6h4M3 9h4M3 12h4M3 15h4M3 18h4M25 6h4M25 9h4M25 12h4" stroke="#a8a8a8" stroke-width="1"/></svg>
<div class="t" style="left:84px;top:872.5px;width:248px;overflow:hidden;padding-bottom:6px;font-size:17.4px;color:#000;">snagit.exe</div>
<div class="t" style="left:1539px;top:873.0px;font-size:17.4px;color:#000;font-weight:normal;">10.01.2025 20:15:19</div>
<svg style="position:absolute;left:48px;top:898px;" width="33" height="30" viewBox="0 0 33 30"><defs><linearGradient id="mg" x1="0" y1="0" x2="1" y2="1"><stop offset="0" stop-color="#2ee0ee"/><stop offset="1" stop-color="#0a6ec8"/></linearGradient><radialGradient id="cd" cx=".45" cy=".4" r=".65"><stop offset="0" stop-color="#ffffff"/><stop offset=".6" stop-color="#e0e0e0"/><stop offset="1" stop-color="#a8a8a8"/></radialGradient></defs><rect x="3.5" y="1.5" width="27" height="20" fill="url(#mg)" stroke="#2a5070" stroke-width=".7"/><rect x="12" y="24" width="12" height="2" fill="#505050"/><circle cx="9.5" cy="19.5" r="9.3" fill="url(#cd)" stroke="#b0b0b0" stroke-width=".5"/><circle cx="9.5" cy="19.5" r="2.6" fill="#3a8ee6"/></svg>
<div class="t" style="left:84px;top:904.5px;width:248px;overflow:hidden;padding-bottom:6px;font-size:17.4px;color:#000;">Setup_Snagit_x64_Release_ENU.msi</div>
<div class="t" style="left:1539px;top:905.0px;font-size:17.4px;color:#000;font-weight:normal;">19.02.2026 16:07:42</div>
<svg style="position:absolute;left:48px;top:930px;" width="33" height="30" viewBox="0 0 33 30"><defs><linearGradient id="mg" x1="0" y1="0" x2="1" y2="1"><stop offset="0" stop-color="#2ee0ee"/><stop offset="1" stop-color="#0a6ec8"/></linearGradient><radialGradient id="cd" cx=".45" cy=".4" r=".65"><stop offset="0" stop-color="#ffffff"/><stop offset=".6" stop-color="#e0e0e0"/><stop offset="1" stop-color="#a8a8a8"/></radialGradient></defs><rect x="3.5" y="1.5" width="27" height="20" fill="url(#mg)" stroke="#2a5070" stroke-width=".7"/><rect x="12" y="24" width="12" height="2" fill="#505050"/><circle cx="9.5" cy="19.5" r="9.3" fill="url(#cd)" stroke="#b0b0b0" stroke-width=".5"/><circle cx="9.5" cy="19.5" r="2.6" fill="#3a8ee6"/></svg>
<div class="t" style="left:84px;top:936.5px;width:248px;overflow:hidden;padding-bottom:6px;font-size:17.4px;color:#000;">be64ab.msi</div>
<div class="t" style="left:1539px;top:937.0px;font-size:17.4px;color:#000;font-weight:normal;">19.02.2026 16:07:42</div>
<svg style="position:absolute;left:48px;top:961px;" width="32" height="32" viewBox="0 0 32 32"><path d="M3 2 L28 16 L3 30 Z" fill="none" stroke="#3a8ee8" stroke-width="2.4" stroke-linejoin="round"/></svg>
<div class="t" style="left:84px;top:968.5px;width:248px;overflow:hidden;padding-bottom:6px;font-size:17.4px;color:#000;">Jermaine Jackson - When The Rain</div>
<div class="t" style="left:1539px;top:969.0px;font-size:17.4px;color:#000;font-weight:normal;">14.05.2023 22:38:48</div>
<svg style="position:absolute;left:52px;top:994px;" width="24" height="31" viewBox="0 0 24 31"><path d="M1.5 .5 H16.5 L22.5 6.5 V29.5 H1.5 Z" fill="#fafafa" stroke="#7c7c7c" stroke-width="1"/><path d="M16.5 .5 V6.5 H22.5" fill="#e8e8e8" stroke="#9a9a9a" stroke-width="1"/></svg>
<div class="t" style="left:84px;top:1000.5px;width:248px;overflow:hidden;padding-bottom:6px;font-size:17.4px;color:#000;">Aiarty_matting_intern_sigmoid.onnx</div>
<div class="t" style="left:1539px;top:1001.0px;font-size:17.4px;color:#000;font-weight:normal;">17.02.2026 11:10:27</div>
<svg style="position:absolute;left:52px;top:1026px;" width="24" height="31" viewBox="0 0 24 31"><path d="M1.5 .5 H16.5 L22.5 6.5 V29.5 H1.5 Z" fill="#fafafa" stroke="#7c7c7c" stroke-width="1"/><path d="M16.5 .5 V6.5 H22.5" fill="#e8e8e8" stroke="#9a9a9a" stroke-width="1"/></svg>
<div class="t" style="left:84px;top:1032.5px;width:248px;overflow:hidden;padding-bottom:6px;font-size:17.4px;color:#000;">Aiarty_Intern_V2_[1024x1024]_A</div>
<div class="t" style="left:1539px;top:1033.0px;font-size:17.4px;color:#000;font-weight:normal;">17.02.2026 11:11:12</div>
<svg style="position:absolute;left:52px;top:1058px;" width="24" height="31" viewBox="0 0 24 31"><path d="M1.5 .5 H16.5 L22.5 6.5 V29.5 H1.5 Z" fill="#fafafa" stroke="#7c7c7c" stroke-width="1"/><path d="M16.5 .5 V6.5 H22.5" fill="#e8e8e8" stroke="#9a9a9a" stroke-width="1"/></svg>
<div class="t" style="left:84px;top:1064.5px;width:248px;overflow:hidden;padding-bottom:6px;font-size:17.4px;color:#000;">OpenClipImageEncoder.onmlc</div>
<div class="t" style="left:1539px;top:1065.0px;font-size:17.4px;color:#000;font-weight:normal;">26.02.2026 18:23:39</div>
<div class="t" style="left:353px;top:1064.5px;width:698px;overflow:hidden;padding-bottom:6px;font-size:18px;">C:\Users\lipi\AppData\Roaming\ON1\ON1 Resize AI 2026\Models\OpenClipImageEncoder.onmlc</div>
<div style="position:absolute;left:1058px;top:1058px;width:163px;height:29px;background:#f0f0f0;border:1px solid #dadada;box-sizing:border-box;"></div>
<div class="t" style="left:1060px;top:1064.3px;width:154px;text-align:right;font-size:18px;">0,2 %</div>
<div class="t" style="left:1222px;top:1064.3px;width:143px;text-align:right;font-size:18px;">336,8 МБ</div>
<div style="position:absolute;left:1372px;top:1056px;width:150px;height:32px;background:rgba(0,0,0,0.04);"></div>
<div class="t" style="left:1372px;top:1064.3px;width:143px;text-align:right;font-size:18px;">336,8 МБ</div>
<svg style="position:absolute;left:52px;top:1090px;" width="24" height="31" viewBox="0 0 24 31"><path d="M1.5 .5 H16.5 L22.5 6.5 V29.5 H1.5 Z" fill="#fafafa" stroke="#7c7c7c" stroke-width="1"/><path d="M16.5 .5 V6.5 H22.5" fill="#e8e8e8" stroke="#9a9a9a" stroke-width="1"/><polygon points="14.20,13.00 12.46,14.43 12.68,16.68 10.43,16.46 9.00,18.20 7.57,16.46 5.32,16.68 5.54,14.43 3.80,13.00 5.54,11.57 5.32,9.32 7.57,9.54 9.00,7.80 10.43,9.54 12.68,9.32 12.46,11.57" fill="#9ca3ab"/><circle cx="9" cy="13" r="1.82" fill="#fafafa"/><polygon points="19.70,20.50 18.29,21.66 18.47,23.47 16.66,23.29 15.50,24.70 14.34,23.29 12.53,23.47 12.71,21.66 11.30,20.50 12.71,19.34 12.53,17.53 14.34,17.71 15.50,16.30 16.66,17.71 18.47,17.53 18.29,19.34" fill="#596069"/><circle cx="15.5" cy="20.5" r="1.47" fill="#fafafa"/></svg>
<div class="t" style="left:84px;top:1096.5px;width:248px;overflow:hidden;padding-bottom:6px;font-size:17.4px;color:#000;">nlstats.db</div>
<div class="t" style="left:1539px;top:1097.0px;font-size:17.4px;color:#000;font-weight:normal;">07.03.2026 9:23:26</div>
<div class="t" style="left:353px;top:1096.5px;width:698px;overflow:hidden;padding-bottom:6px;font-size:18px;">C:\ProgramData\Locktime\NetLimiter\5\Stats\nlstats.db</div>
<div style="position:absolute;left:1058px;top:1090px;width:163px;height:29px;background:#f0f0f0;border:1px solid #dadada;box-sizing:border-box;"></div>
<div class="t" style="left:1060px;top:1096.3px;width:154px;text-align:right;font-size:18px;">0,2 %</div>
<div class="t" style="left:1222px;top:1096.3px;width:143px;text-align:right;font-size:18px;">332,2 МБ</div>
<div style="position:absolute;left:1372px;top:1088px;width:150px;height:32px;background:rgba(0,0,0,0.04);"></div>
<div class="t" style="left:1372px;top:1096.3px;width:143px;text-align:right;font-size:18px;">332,2 МБ</div>
<div style="position:absolute;left:338px;top:352px;width:1px;height:768px;background:repeating-linear-gradient(#e8e8e8 0 1px,transparent 1px 3px);"></div>
<div style="position:absolute;left:1732px;top:352px;width:1px;height:768px;background:repeating-linear-gradient(#e8e8e8 0 1px,transparent 1px 3px);"></div>
<div style="position:absolute;left:1852px;top:352px;width:1px;height:768px;background:repeating-linear-gradient(#e8e8e8 0 1px,transparent 1px 3px);"></div>
<div style="position:absolute;left:1868px;top:353px;width:26px;height:768px;background:#f0f0f0;"></div>
<svg style="position:absolute;left:1872px;top:361px;" width="16" height="12" viewBox="0 0 16 12"><path d="M3 9.5 L8 3.5 L13 9.5Z" fill="#8a8a8a" stroke="#8a8a8a" stroke-width="1.5" stroke-linejoin="round"/></svg>
<div style="position:absolute;left:1876px;top:378px;width:9px;height:28px;background:#8a8a8a;border-radius:4.5px;"></div>
<svg style="position:absolute;left:1872px;top:1102px;" width="16" height="12" viewBox="0 0 16 12"><path d="M3 2.5 L8 8.5 L13 2.5Z" fill="#8a8a8a" stroke="#8a8a8a" stroke-width="1.5" stroke-linejoin="round"/></svg>
<div style="position:absolute;left:8px;top:1120px;width:1889px;height:28px;background:#f0f0f0;"></div>
<svg style="position:absolute;left:14px;top:1126px;" width="12" height="16" viewBox="0 0 12 16"><path d="M10 2 L3 8 L10 14Z" fill="#8a8a8a" stroke="#8a8a8a" stroke-width="1.5" stroke-linejoin="round"/></svg>
<div style="position:absolute;left:35px;top:1130px;width:1601px;height:9px;background:#8a8a8a;border-radius:4.5px;"></div>
<svg style="position:absolute;left:1848px;top:1126px;" width="12" height="16" viewBox="0 0 12 16"><path d="M2 2 L9 8 L2 14Z" fill="#8a8a8a" stroke="#8a8a8a" stroke-width="1.5" stroke-linejoin="round"/></svg>
<div style="position:absolute;left:7px;top:1147px;width:1890px;height:2px;background:linear-gradient(#888 0 1px,#fff 1px 2px);"></div>
<div style="position:absolute;left:5px;top:1149px;width:1892px;height:35px;background:#f0f0f0;"></div>
<div style="position:absolute;left:680px;top:1152px;width:1px;height:30px;background:#d8d8d8;"></div>
<div style="position:absolute;left:1324px;top:1152px;width:1px;height:30px;background:#d8d8d8;"></div>
<div class="t" style="left:1329px;top:1160.4px;font-size:17.25px;color:#000;font-weight:normal;">(1 000 файл(-а,ов)&nbsp;&nbsp;Общий размер: 124,4 ГБ&nbsp;&nbsp;На диске: 124,2 ГБ)</div>
<div style="position:absolute;left:1893px;top:236px;width:1px;height:912px;background:#e2e2e2;"></div>
<div style="position:absolute;left:1894px;top:236px;width:1px;height:948px;background:#ffffff;"></div>
<div style="position:absolute;left:1895px;top:236px;width:3px;height:948px;background:#f0f0f0;"></div>
<div style="position:absolute;left:345px;top:143px;width:1209px;height:909px;background:#f0f0f0;border:2px solid #2e68c2;border-radius:9px;box-sizing:border-box;box-shadow:0 18px 42px rgba(0,0,0,0.38),0 0 6px rgba(0,0,0,0.10);"></div>
<div style="position:absolute;left:345px;top:143px;width:1209px;height:37px;background:#0078d4;border-radius:9px 9px 0 0;"></div>
<div class="t" style="left:350.5px;top:153.6px;font-size:17px;color:#ffffff;font-weight:normal;">Цвета</div>
<div class="t" style="left:359px;top:197.2px;font-size:17.5px;color:#000;font-weight:normal;">Тема:</div>
<div class="t" style="left:359px;top:234.7px;font-size:17.5px;color:#000;font-weight:normal;">Окраска:</div>
<div class="t" style="left:359px;top:264.7px;font-size:17.5px;color:#000;font-weight:normal;">Цвет:</div>
<div style="position:absolute;left:494px;top:188px;width:218px;height:33px;background:#fdfdfd;border:1px solid #d6d6d6;border-radius:3px;box-sizing:border-box;"></div>
<div class="t" style="left:498px;top:197.6px;font-size:18.2px;color:#000;font-weight:normal;">Автовыбор</div>
<svg style="position:absolute;left:690px;top:199px;" width="14" height="10" viewBox="0 0 14 10"><path d="M1.5 2.5 L7 8 L12.5 2.5" fill="none" stroke="#606060" stroke-width="1.1"/></svg>
<svg style="position:absolute;left:493px;top:231px;" width="22" height="22" viewBox="0 0 22 22"><circle cx="11" cy="11" r="10" fill="#0a64c0"/><circle cx="11" cy="11" r="4.2" fill="#fff"/></svg>
<div class="t" style="left:519px;top:236.7px;font-size:17.5px;color:#000;font-weight:normal;">Размер</div>
<svg style="position:absolute;left:642px;top:231px;" width="22" height="22" viewBox="0 0 22 22"><circle cx="11" cy="11" r="9.5" fill="#f6f6f6" stroke="#8a8a8a" stroke-width="1"/></svg>
<div class="t" style="left:668px;top:236.7px;font-size:17.5px;color:#000;font-weight:normal;">Расширение</div>
<div class="t" style="left:494px;top:267.6px;font-size:17px;color:#a6a6a6;font-weight:normal;">Расширения файлов:</div>
<div style="position:absolute;left:796px;top:257px;width:110px;height:29px;background:#f5f5f5;border:1px solid #e6e6e6;border-radius:4px;box-sizing:border-box;"></div>
<div class="t" style="left:803px;top:265.1px;font-size:17px;color:#8e8e8e;font-weight:normal;">Стандартно</div>
<div style="position:absolute;left:359px;top:288px;width:111px;height:705px;background:#efefef;border:1px solid #8c8c8c;box-sizing:border-box;"></div>
<div style="position:absolute;left:361px;top:290px;width:107px;height:53px;background:#0078d4;"></div>
<div style="position:absolute;left:367px;top:296px;width:42px;height:42px;border:1px solid #ffffff;background:#0078d4;box-sizing:border-box;"></div>
<div style="position:absolute;left:369px;top:298px;width:38px;height:38px;background:#9a4e0e;"></div>
<div class="t" style="left:416px;top:309.8px;font-size:18px;color:#000;font-weight:bold;">1</div>
<div style="position:absolute;left:361px;top:343px;width:107px;height:1px;background:#ffffff;"></div>
<div style="position:absolute;left:367px;top:350px;width:42px;height:42px;border:1px solid #a8a8a8;background:#efefef;box-sizing:border-box;"></div>
<div style="position:absolute;left:369px;top:352px;width:38px;height:38px;background:#8a8a08;"></div>
<div class="t" style="left:416px;top:363.8px;font-size:18px;color:#000;font-weight:bold;">2</div>
<div style="position:absolute;left:361px;top:397px;width:107px;height:1px;background:#ffffff;"></div>
<div style="position:absolute;left:367px;top:404px;width:42px;height:42px;border:1px solid #a8a8a8;background:#efefef;box-sizing:border-box;"></div>
<div style="position:absolute;left:369px;top:406px;width:38px;height:38px;background:#19731e;"></div>
<div class="t" style="left:416px;top:417.8px;font-size:18px;color:#000;font-weight:bold;">3</div>
<div style="position:absolute;left:361px;top:451px;width:107px;height:1px;background:#ffffff;"></div>
<div style="position:absolute;left:367px;top:458px;width:42px;height:42px;border:1px solid #a8a8a8;background:#efefef;box-sizing:border-box;"></div>
<div style="position:absolute;left:369px;top:460px;width:38px;height:38px;background:#6a28a6;"></div>
<div class="t" style="left:416px;top:471.8px;font-size:18px;color:#000;font-weight:bold;">4</div>
<div style="position:absolute;left:361px;top:505px;width:107px;height:1px;background:#ffffff;"></div>
<div style="position:absolute;left:367px;top:512px;width:42px;height:42px;border:1px solid #a8a8a8;background:#efefef;box-sizing:border-box;"></div>
<div style="position:absolute;left:369px;top:514px;width:38px;height:38px;background:#84254a;"></div>
<div class="t" style="left:416px;top:525.8px;font-size:18px;color:#000;font-weight:bold;">5</div>
<div style="position:absolute;left:361px;top:559px;width:107px;height:1px;background:#ffffff;"></div>
<div style="position:absolute;left:367px;top:566px;width:42px;height:42px;border:1px solid #a8a8a8;background:#efefef;box-sizing:border-box;"></div>
<div style="position:absolute;left:369px;top:568px;width:38px;height:38px;background:#1270c8;"></div>
<div class="t" style="left:416px;top:579.8px;font-size:18px;color:#000;font-weight:bold;">6</div>
<div style="position:absolute;left:361px;top:613px;width:107px;height:1px;background:#ffffff;"></div>
<div style="position:absolute;left:367px;top:620px;width:42px;height:42px;border:1px solid #a8a8a8;background:#efefef;box-sizing:border-box;"></div>
<div style="position:absolute;left:369px;top:622px;width:38px;height:38px;background:#5850f8;"></div>
<div class="t" style="left:416px;top:633.8px;font-size:18px;color:#000;font-weight:bold;">7</div>
<div style="position:absolute;left:361px;top:667px;width:107px;height:1px;background:#ffffff;"></div>
<div style="position:absolute;left:367px;top:674px;width:42px;height:42px;border:1px solid #a8a8a8;background:#efefef;box-sizing:border-box;"></div>
<div style="position:absolute;left:369px;top:676px;width:38px;height:38px;background:#a01e96;"></div>
<div class="t" style="left:416px;top:687.8px;font-size:18px;color:#000;font-weight:bold;">8</div>
<div style="position:absolute;left:361px;top:721px;width:107px;height:1px;background:#ffffff;"></div>
<div style="position:absolute;left:367px;top:728px;width:42px;height:42px;border:1px solid #a8a8a8;background:#efefef;box-sizing:border-box;"></div>
<div style="position:absolute;left:369px;top:730px;width:38px;height:38px;background:#b01010;"></div>
<div class="t" style="left:416px;top:741.8px;font-size:18px;color:#000;font-weight:bold;">9</div>
<div style="position:absolute;left:361px;top:775px;width:107px;height:1px;background:#ffffff;"></div>
<div style="position:absolute;left:367px;top:782px;width:42px;height:42px;border:1px solid #a8a8a8;background:#efefef;box-sizing:border-box;"></div>
<div style="position:absolute;left:369px;top:784px;width:38px;height:38px;background:#4a6a1a;"></div>
<div class="t" style="left:416px;top:795.8px;font-size:18px;color:#000;font-weight:bold;">10</div>
<div style="position:absolute;left:361px;top:829px;width:107px;height:1px;background:#ffffff;"></div>
<div style="position:absolute;left:367px;top:836px;width:42px;height:42px;border:1px solid #a8a8a8;background:#efefef;box-sizing:border-box;"></div>
<div style="position:absolute;left:369px;top:838px;width:38px;height:38px;background:#10a080;"></div>
<div class="t" style="left:416px;top:849.8px;font-size:18px;color:#000;font-weight:bold;">11</div>
<div style="position:absolute;left:361px;top:883px;width:107px;height:1px;background:#ffffff;"></div>
<div style="position:absolute;left:367px;top:890px;width:42px;height:42px;border:1px solid #a8a8a8;background:#efefef;box-sizing:border-box;"></div>
<div style="position:absolute;left:369px;top:892px;width:38px;height:38px;background:#613e12;"></div>
<div class="t" style="left:416px;top:903.8px;font-size:18px;color:#000;font-weight:bold;">12</div>
<div style="position:absolute;left:361px;top:937px;width:107px;height:1px;background:#ffffff;"></div>
<div style="position:absolute;left:367px;top:944px;width:42px;height:42px;border:1px solid #a8a8a8;background:#efefef;box-sizing:border-box;"></div>
<div style="position:absolute;left:369px;top:946px;width:38px;height:38px;background:#484848;"></div>
<div class="t" style="left:416px;top:957.8px;font-size:18px;color:#000;font-weight:bold;">13</div>
<div style="position:absolute;left:494px;top:306px;width:439px;height:32px;background:#ffffff;"></div>
<div class="t" style="left:497px;top:315.3px;font-size:17.9px;color:#6d6d6d;font-weight:normal;">mp3,ogg,wav,wma</div>
<div style="position:absolute;left:494px;top:360px;width:439px;height:32px;background:#ffffff;"></div>
<div class="t" style="left:497px;top:368.9px;font-size:17.9px;color:#6d6d6d;font-weight:normal;">mkv,mp4,mpeg,mpg,mov,ogm,ogv,swf,webm,wmv</div>
<div style="position:absolute;left:494px;top:413px;width:439px;height:32px;background:#ffffff;"></div>
<div class="t" style="left:497px;top:422.4px;font-size:17.9px;color:#6d6d6d;font-weight:normal;">bmp,gif,jpeg,jpg,pcx,png,tga,tif,tiff</div>
<div style="position:absolute;left:494px;top:467px;width:439px;height:32px;background:#ffffff;"></div>
<div class="t" style="left:497px;top:476.0px;font-size:17.9px;color:#6d6d6d;font-weight:normal;">7z,ace,arj,cab,gz,gzip,jar,rar,tar,tgz,z,zip</div>
<div style="position:absolute;left:494px;top:520px;width:439px;height:32px;background:#ffffff;"></div>
<div class="t" style="left:497px;top:529.5px;font-size:17.9px;color:#6d6d6d;font-weight:normal;">exe</div>
<div style="position:absolute;left:494px;top:574px;width:439px;height:32px;background:#ffffff;"></div>
<div class="t" style="left:497px;top:583.1px;font-size:17.9px;color:#6d6d6d;font-weight:normal;">dll</div>
<div style="position:absolute;left:494px;top:627px;width:439px;height:32px;background:#ffffff;"></div>
<div style="position:absolute;left:932px;top:627px;width:1px;height:1px;background:#666;"></div>
<div style="position:absolute;left:932px;top:658px;width:1px;height:1px;background:#666;"></div>
<div class="t" style="left:497px;top:636.6px;font-size:17.9px;color:#6d6d6d;font-weight:normal;">sys</div>
<div style="position:absolute;left:494px;top:681px;width:439px;height:32px;background:#ffffff;"></div>
<div style="position:absolute;left:932px;top:681px;width:1px;height:1px;background:#666;"></div>
<div style="position:absolute;left:932px;top:712px;width:1px;height:1px;background:#666;"></div>
<div class="t" style="left:497px;top:690.2px;font-size:17.9px;color:#6d6d6d;font-weight:normal;">txt,log</div>
<div style="position:absolute;left:494px;top:734px;width:439px;height:32px;background:#ffffff;"></div>
<div style="position:absolute;left:932px;top:734px;width:1px;height:1px;background:#666;"></div>
<div style="position:absolute;left:932px;top:765px;width:1px;height:1px;background:#666;"></div>
<div class="t" style="left:497px;top:743.7px;font-size:17.9px;color:#6d6d6d;font-weight:normal;">vdi,vhd,vhdx,qcow</div>
<div style="position:absolute;left:494px;top:788px;width:439px;height:32px;background:#ffffff;"></div>
<div style="position:absolute;left:932px;top:788px;width:1px;height:1px;background:#666;"></div>
<div style="position:absolute;left:932px;top:819px;width:1px;height:1px;background:#666;"></div>
<div class="t" style="left:497px;top:797.3px;font-size:17.9px;color:#6d6d6d;font-weight:normal;">iso,nrg,bin</div>
<div style="position:absolute;left:494px;top:842px;width:439px;height:32px;background:#ffffff;"></div>
<div style="position:absolute;left:932px;top:842px;width:1px;height:1px;background:#666;"></div>
<div style="position:absolute;left:932px;top:873px;width:1px;height:1px;background:#666;"></div>
<div class="t" style="left:497px;top:850.8px;font-size:17.9px;color:#6d6d6d;font-weight:normal;">doc,dot,wbk,docx,xls,xlsx,ppt,pptx,pub</div>
<div style="position:absolute;left:494px;top:895px;width:439px;height:32px;background:#ffffff;"></div>
<div style="position:absolute;left:932px;top:895px;width:1px;height:1px;background:#666;"></div>
<div style="position:absolute;left:932px;top:926px;width:1px;height:1px;background:#666;"></div>
<div class="t" style="left:497px;top:904.4px;font-size:17.9px;color:#6d6d6d;font-weight:normal;">msi</div>
<div style="position:absolute;left:943px;top:288px;width:438px;height:701px;background:#f0f0f0;border-top:1px solid #a0a0a0;border-left:1px solid #a0a0a0;box-sizing:border-box;"></div>
<div style="position:absolute;left:944px;top:298px;width:389px;height:688px;background:linear-gradient(to bottom,rgba(128,128,128,0) 0%,rgba(128,128,128,1) 100%),linear-gradient(to right,#ea1c10 0%,#e8e410 25%,#14e014 50%,#12e6e0 75%,#1010e8 100%);"></div>
<svg style="position:absolute;left:980px;top:350px;" width="20" height="20" viewBox="0 0 20 20"><path d="M10 2v5M10 13v5M2 10h5M13 10h5" stroke="#fff" stroke-width="2"/></svg>
<div style="position:absolute;left:1348px;top:295px;width:23px;height:694px;background:linear-gradient(to bottom,#ffffff 0%,#f0c8a0 22%,#ef7e1c 50%,#7a3e0a 73%,#000000 100%);"></div>
<svg style="position:absolute;left:1372px;top:757px;" width="10" height="12" viewBox="0 0 10 12"><path d="M9 1 L2 6 L9 11Z" fill="#7a7a7a"/></svg>
<div style="position:absolute;left:1386px;top:289px;width:156px;height:144px;background:#fbfbfb;border:1px solid #d8d8d8;border-radius:4px;box-sizing:border-box;"></div>
<div style="position:absolute;left:1386px;top:444px;width:156px;height:143px;background:#fbfbfb;border:1px solid #d8d8d8;border-radius:4px;box-sizing:border-box;"></div>
<svg style="position:absolute;left:1427.9px;top:313.9px;" width="73.44" height="68" viewBox="0 0 108 100">
<defs>
<linearGradient id="blg" x1="0" y1="0" x2="1" y2="1"><stop offset="0" stop-color="#ff7a00"/><stop offset="0.35" stop-color="#ffa030"/><stop offset="0.7" stop-color="#ffe4a0"/><stop offset="1" stop-color="#fff4c8"/></linearGradient>
<filter id="bbl" x="-20%" y="-20%" width="140%" height="140%"><feGaussianBlur stdDeviation="1.6"/></filter>
<filter id="bbl2" x="-30%" y="-30%" width="160%" height="160%"><feGaussianBlur stdDeviation="1.0"/></filter>
</defs>
<path d="M11 10 h41 l7 8 h37 v61 h-85 z" fill="none" stroke="#3a3a3a" stroke-width="6" stroke-linejoin="round" filter="url(#bbl)" opacity="0.9"/>
<path d="M11 10 h41 l7 8 h37 v61 h-85 z" fill="url(#blg)" stroke="#1a0e08" stroke-width="1.6" stroke-linejoin="round"/>
<polygon points="46.84,48.21 47.46,61.97 59.99,67.70 47.09,72.54 45.51,86.23 36.92,75.46 23.42,78.18 31.01,66.69 24.24,54.69 37.52,58.35" transform="scale(1,0.45) translate(0,82)" fill="#a89068" opacity="0.45" filter="url(#bbl2)"/>
<polygon points="51.52,18.43 49.83,35.31 64.77,43.34 48.19,46.95 45.17,63.64 36.62,48.99 19.81,51.27 31.10,38.61 23.74,23.33 39.26,30.15" fill="#2a0a1a" filter="url(#bbl2)"/>
<polygon points="50.64,20.23 49.39,35.54 62.79,43.06 47.83,46.60 44.82,61.67 36.84,48.54 21.58,50.33 31.59,38.68 25.17,24.72 39.35,30.64" fill="#5a2848"/>
<polygon points="47.58,26.52 48.06,36.24 55.85,42.09 46.75,45.56 43.60,54.77 37.49,47.19 27.76,47.04 33.08,38.89 30.21,29.58 39.61,32.12" fill="#f4f040" stroke="#f0d8f0" stroke-width="2"/>
<path d="M50 49 L94 92" stroke="#1a0a10" stroke-width="5" stroke-linecap="round"/>
<path d="M50 48.5 L94 91.5" stroke="#ffffff" stroke-width="2.2" stroke-linecap="round"/>
</svg>
<div class="t" style="left:1416px;top:390.2px;font-size:17.5px;color:#000;font-weight:normal;">Стандартно</div>
<svg style="position:absolute;left:1435px;top:471px;" width="60" height="60" viewBox="0 0 60 60"><defs><pattern id="dp" width="2.9" height="2.9" patternUnits="userSpaceOnUse" patternTransform="rotate(20)"><circle cx="1.45" cy="1.45" r="1.28" fill="#fff"/></pattern><mask id="dm"><rect x="0" y="0" width="60" height="60" fill="url(#dp)"/></mask></defs><g mask="url(#dm)"><circle cx="29" cy="29" r="28.3" fill="#2a9e88"/><text x="29.5" y="39.8" text-anchor="middle" font-family="Liberation Serif" font-style="italic" font-weight="bold" font-size="40" fill="#f46a30" stroke="#f46a30" stroke-width="0.8">12</text></g></svg>
<div class="t" style="left:1415px;top:545.2px;font-size:17.5px;color:#000;font-weight:normal;">Дальтонизм</div>
<div style="position:absolute;left:822px;top:1000px;width:111px;height:36px;background:#fdfdfd;border:1px solid #2a6fd0;border-radius:4px;box-sizing:border-box;"></div>
<div class="t" style="left:864px;top:1011.2px;font-size:17.5px;color:#000;font-weight:normal;">OK</div>
<div style="position:absolute;left:966px;top:1000px;width:111px;height:36px;background:#fdfdfd;border:1px solid #d4d4d4;border-radius:4px;box-sizing:border-box;"></div>
<div class="t" style="left:990px;top:1011.2px;font-size:17.5px;color:#000;font-weight:normal;">Отмена</div>
<div style="position:absolute;left:0px;top:0px;width:1901px;height:1188px;border:2px solid #bdbdbd;border-radius:10px;box-sizing:border-box;"></div>
</body></html>
